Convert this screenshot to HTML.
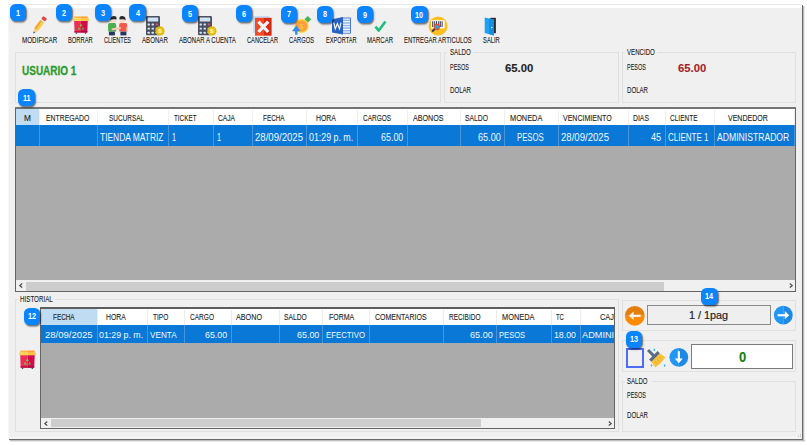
<!DOCTYPE html>
<html><head><meta charset="utf-8"><style>
html,body{margin:0;padding:0;width:807px;height:445px;overflow:hidden;background:#ffffff;position:relative;font-family:"Liberation Sans",sans-serif;}
.b{position:absolute;box-sizing:border-box;}
.t{position:absolute;white-space:pre;line-height:1;transform-origin:0 0;-webkit-text-stroke:0.1px currentColor;font-family:"Liberation Sans",sans-serif;}
</style></head><body>
<div class="b" style="left:8.00px;top:4.00px;width:794.00px;height:435.00px;background:#f0f0f0;"></div>
<div class="b" style="left:8.00px;top:4.00px;width:794.00px;height:1.00px;background:#e9e9e9;"></div>
<div class="b" style="left:8.00px;top:5.00px;width:794.00px;height:3.00px;background:#ffffff;"></div>
<div class="b" style="left:8.00px;top:8.00px;width:1.00px;height:431.00px;background:#f7f7f7;"></div>
<div class="b" style="left:9.00px;top:437.00px;width:792.00px;height:1.00px;background:#f8f8f8;"></div>
<div class="b" style="left:802.00px;top:5.00px;width:1.00px;height:435.00px;background:#6a6a6a;"></div>
<div class="b" style="left:803.00px;top:6.00px;width:2.00px;height:435.00px;background:linear-gradient(90deg,#a8a8a8,#ffffff);"></div>
<div class="b" style="left:9.00px;top:439.00px;width:794.00px;height:1.00px;background:#6a6a6a;"></div>
<div class="b" style="left:10.00px;top:440.00px;width:795.00px;height:2.00px;background:linear-gradient(180deg,#a8a8a8,#ffffff);"></div>
<div class="b" style="left:798.00px;top:436.00px;width:1.00px;height:1.00px;background:#b8b8b8;"></div>
<div class="b" style="left:800.00px;top:436.00px;width:1.00px;height:1.00px;background:#b8b8b8;"></div>
<div class="b" style="left:800.00px;top:434.00px;width:1.00px;height:1.00px;background:#b8b8b8;"></div>
<div class="b" style="left:15.00px;top:52.00px;width:426.00px;height:51.00px;border:1px solid #e0e0e0;"></div>
<div class="b" style="left:444.00px;top:52.00px;width:175.00px;height:51.00px;border:1px solid #e0e0e0;"></div>
<div class="b" style="left:447.00px;top:50.00px;width:26.00px;height:4.00px;background:#f0f0f0;"></div>
<div class="b" style="left:622.00px;top:52.00px;width:174.00px;height:51.00px;border:1px solid #e0e0e0;"></div>
<div class="b" style="left:625.00px;top:50.00px;width:32.00px;height:4.00px;background:#f0f0f0;"></div>
<div class="b" style="left:15.00px;top:107.00px;width:781.00px;height:185.00px;border:1px solid #646464;border-top:2px solid #747474;background:#ababab;"></div>
<div class="b" style="left:16.00px;top:109.00px;width:779.00px;height:16.00px;background:#ffffff;"></div>
<div class="b" style="left:16.00px;top:109.00px;width:23.00px;height:16.00px;background:#bfdcf3;"></div>
<div class="b" style="left:16.00px;top:125.00px;width:779.00px;height:20.50px;background:#0a78d6;"></div>
<div class="b" style="left:39.00px;top:110.00px;width:1.00px;height:15.00px;background:#efefef;"></div>
<div class="b" style="left:39.00px;top:125.00px;width:1.00px;height:20.50px;background:#4a95d8;"></div>
<div class="b" style="left:97.40px;top:110.00px;width:1.00px;height:15.00px;background:#efefef;"></div>
<div class="b" style="left:97.40px;top:125.00px;width:1.00px;height:20.50px;background:#4a95d8;"></div>
<div class="b" style="left:168.00px;top:110.00px;width:1.00px;height:15.00px;background:#efefef;"></div>
<div class="b" style="left:168.00px;top:125.00px;width:1.00px;height:20.50px;background:#4a95d8;"></div>
<div class="b" style="left:212.70px;top:110.00px;width:1.00px;height:15.00px;background:#efefef;"></div>
<div class="b" style="left:212.70px;top:125.00px;width:1.00px;height:20.50px;background:#4a95d8;"></div>
<div class="b" style="left:251.60px;top:110.00px;width:1.00px;height:15.00px;background:#efefef;"></div>
<div class="b" style="left:251.60px;top:125.00px;width:1.00px;height:20.50px;background:#4a95d8;"></div>
<div class="b" style="left:306.40px;top:110.00px;width:1.00px;height:15.00px;background:#efefef;"></div>
<div class="b" style="left:306.40px;top:125.00px;width:1.00px;height:20.50px;background:#4a95d8;"></div>
<div class="b" style="left:357.20px;top:110.00px;width:1.00px;height:15.00px;background:#efefef;"></div>
<div class="b" style="left:357.20px;top:125.00px;width:1.00px;height:20.50px;background:#4a95d8;"></div>
<div class="b" style="left:407.40px;top:110.00px;width:1.00px;height:15.00px;background:#efefef;"></div>
<div class="b" style="left:407.40px;top:125.00px;width:1.00px;height:20.50px;background:#4a95d8;"></div>
<div class="b" style="left:459.50px;top:110.00px;width:1.00px;height:15.00px;background:#efefef;"></div>
<div class="b" style="left:459.50px;top:125.00px;width:1.00px;height:20.50px;background:#4a95d8;"></div>
<div class="b" style="left:503.60px;top:110.00px;width:1.00px;height:15.00px;background:#efefef;"></div>
<div class="b" style="left:503.60px;top:125.00px;width:1.00px;height:20.50px;background:#4a95d8;"></div>
<div class="b" style="left:557.90px;top:110.00px;width:1.00px;height:15.00px;background:#efefef;"></div>
<div class="b" style="left:557.90px;top:125.00px;width:1.00px;height:20.50px;background:#4a95d8;"></div>
<div class="b" style="left:628.00px;top:110.00px;width:1.00px;height:15.00px;background:#efefef;"></div>
<div class="b" style="left:628.00px;top:125.00px;width:1.00px;height:20.50px;background:#4a95d8;"></div>
<div class="b" style="left:665.30px;top:110.00px;width:1.00px;height:15.00px;background:#efefef;"></div>
<div class="b" style="left:665.30px;top:125.00px;width:1.00px;height:20.50px;background:#4a95d8;"></div>
<div class="b" style="left:714.00px;top:110.00px;width:1.00px;height:15.00px;background:#efefef;"></div>
<div class="b" style="left:714.00px;top:125.00px;width:1.00px;height:20.50px;background:#4a95d8;"></div>
<div class="b" style="left:794.00px;top:110.00px;width:1.00px;height:15.00px;background:#efefef;"></div>
<div class="b" style="left:794.00px;top:125.00px;width:1.00px;height:20.50px;background:#4a95d8;"></div>
<div class="b" style="left:16.00px;top:280.00px;width:779.00px;height:11.00px;background:#f0f0f0;"></div>
<div class="b" style="left:26.00px;top:281.50px;width:638.00px;height:9.00px;background:#cdcdcd;"></div>
<div class="b" style="left:15.00px;top:299.00px;width:604.00px;height:133.00px;border:1px solid #e0e0e0;"></div>
<div class="b" style="left:18.00px;top:297.00px;width:37.00px;height:6.00px;background:#f0f0f0;"></div>
<div class="b" style="left:40.00px;top:307.00px;width:575.00px;height:122.00px;border:1px solid #646464;border-top:2px solid #5e5e5e;background:#ababab;"></div>
<div class="b" style="left:41.00px;top:309.00px;width:573.00px;height:16.30px;background:#ffffff;"></div>
<div class="b" style="left:41.00px;top:309.00px;width:55.50px;height:16.30px;background:#bfdcf3;"></div>
<div class="b" style="left:41.00px;top:325.30px;width:573.00px;height:17.40px;background:#0a78d6;"></div>
<div class="b" style="left:96.50px;top:310.00px;width:1.00px;height:15.30px;background:#ececec;"></div>
<div class="b" style="left:96.50px;top:325.30px;width:1.00px;height:17.40px;background:#4a95d8;"></div>
<div class="b" style="left:147.00px;top:310.00px;width:1.00px;height:15.30px;background:#ececec;"></div>
<div class="b" style="left:147.00px;top:325.30px;width:1.00px;height:17.40px;background:#4a95d8;"></div>
<div class="b" style="left:184.20px;top:310.00px;width:1.00px;height:15.30px;background:#ececec;"></div>
<div class="b" style="left:184.20px;top:325.30px;width:1.00px;height:17.40px;background:#4a95d8;"></div>
<div class="b" style="left:230.60px;top:310.00px;width:1.00px;height:15.30px;background:#ececec;"></div>
<div class="b" style="left:230.60px;top:325.30px;width:1.00px;height:17.40px;background:#4a95d8;"></div>
<div class="b" style="left:278.70px;top:310.00px;width:1.00px;height:15.30px;background:#ececec;"></div>
<div class="b" style="left:278.70px;top:325.30px;width:1.00px;height:17.40px;background:#4a95d8;"></div>
<div class="b" style="left:322.40px;top:310.00px;width:1.00px;height:15.30px;background:#ececec;"></div>
<div class="b" style="left:322.40px;top:325.30px;width:1.00px;height:17.40px;background:#4a95d8;"></div>
<div class="b" style="left:369.40px;top:310.00px;width:1.00px;height:15.30px;background:#ececec;"></div>
<div class="b" style="left:369.40px;top:325.30px;width:1.00px;height:17.40px;background:#4a95d8;"></div>
<div class="b" style="left:443.00px;top:310.00px;width:1.00px;height:15.30px;background:#ececec;"></div>
<div class="b" style="left:443.00px;top:325.30px;width:1.00px;height:17.40px;background:#4a95d8;"></div>
<div class="b" style="left:496.30px;top:310.00px;width:1.00px;height:15.30px;background:#ececec;"></div>
<div class="b" style="left:496.30px;top:325.30px;width:1.00px;height:17.40px;background:#4a95d8;"></div>
<div class="b" style="left:550.50px;top:310.00px;width:1.00px;height:15.30px;background:#ececec;"></div>
<div class="b" style="left:550.50px;top:325.30px;width:1.00px;height:17.40px;background:#4a95d8;"></div>
<div class="b" style="left:579.50px;top:310.00px;width:1.00px;height:15.30px;background:#ececec;"></div>
<div class="b" style="left:579.50px;top:325.30px;width:1.00px;height:17.40px;background:#4a95d8;"></div>
<div class="b" style="left:41.00px;top:417.50px;width:573.00px;height:10.50px;background:#f0f0f0;"></div>
<div class="b" style="left:51.30px;top:418.50px;width:429.50px;height:8.50px;background:#cdcdcd;"></div>
<div class="b" style="left:622.00px;top:299.50px;width:174.00px;height:31.50px;border:1px solid #e0e0e0;"></div>
<div class="b" style="left:622.00px;top:340.00px;width:174.00px;height:32.00px;border:1px solid #e0e0e0;"></div>
<div class="b" style="left:622.00px;top:381.00px;width:174.00px;height:51.00px;border:1px solid #e0e0e0;"></div>
<div class="b" style="left:625.00px;top:378.00px;width:27.00px;height:6.00px;background:#f0f0f0;"></div>
<div class="b" style="left:647.30px;top:305.30px;width:123.30px;height:20.20px;border:1px solid #8a8a8a;background:#efefef;"></div>
<div class="b" style="left:691.20px;top:343.80px;width:101.80px;height:24.80px;border:1px solid #7c7c7c;background:#ffffff;"></div>
<div class="b" style="left:625.50px;top:348.00px;width:18.50px;height:20.00px;border:2px solid #4d6bf6;"></div>
<span class="t" id="t1" style="left:22.00px;top:36.07px;font-size:8.30px;font-weight:400;color:#1a1a1a;transform:scale(0.7560,1.0000);">MODIFICAR</span>
<span class="t" id="t2" style="left:68.00px;top:36.07px;font-size:8.30px;font-weight:400;color:#1a1a1a;transform:scale(0.6958,1.0000);">BORRAR</span>
<span class="t" id="t3" style="left:104.00px;top:36.07px;font-size:8.30px;font-weight:400;color:#1a1a1a;transform:scale(0.6654,1.0000);">CLIENTES</span>
<span class="t" id="t4" style="left:142.00px;top:36.07px;font-size:8.30px;font-weight:400;color:#1a1a1a;transform:scale(0.7362,1.0000);">ABONAR</span>
<span class="t" id="t5" style="left:178.70px;top:36.07px;font-size:8.30px;font-weight:400;color:#1a1a1a;transform:scale(0.7291,1.0000);">ABONAR A CUENTA</span>
<span class="t" id="t6" style="left:246.80px;top:36.07px;font-size:8.30px;font-weight:400;color:#1a1a1a;transform:scale(0.6860,1.0000);">CANCELAR</span>
<span class="t" id="t7" style="left:289.00px;top:36.07px;font-size:8.30px;font-weight:400;color:#1a1a1a;transform:scale(0.6950,1.0000);">CARGOS</span>
<span class="t" id="t8" style="left:325.50px;top:36.07px;font-size:8.30px;font-weight:400;color:#1a1a1a;transform:scale(0.6797,1.0000);">EXPORTAR</span>
<span class="t" id="t9" style="left:367.00px;top:36.07px;font-size:8.30px;font-weight:400;color:#1a1a1a;transform:scale(0.7228,1.0000);">MARCAR</span>
<span class="t" id="t10" style="left:404.00px;top:36.07px;font-size:8.30px;font-weight:400;color:#1a1a1a;transform:scale(0.7116,1.0000);">ENTREGAR ARTICULOS</span>
<span class="t" id="t11" style="left:482.50px;top:36.07px;font-size:8.30px;font-weight:400;color:#1a1a1a;transform:scale(0.7005,1.0000);">SALIR</span>
<span class="t" id="t12" style="left:22.30px;top:64.89px;font-size:11.20px;font-weight:700;color:#2a9a2a;transform:scale(0.8929,1.1300);-webkit-text-stroke:0.25px #2a9a2a;">USUARIO 1</span>
<span class="t" id="t13" style="left:449.70px;top:48.07px;font-size:8.30px;font-weight:400;color:#1a1a1a;transform:scale(0.7356,1.0000);">SALDO</span>
<span class="t" id="t14" style="left:449.70px;top:63.17px;font-size:8.30px;font-weight:400;color:#1a1a1a;transform:scale(0.6575,1.0000);">PESOS</span>
<span class="t" id="t15" style="left:449.70px;top:86.07px;font-size:8.30px;font-weight:400;color:#1a1a1a;transform:scale(0.7344,1.0000);">DOLAR</span>
<span class="t" id="t16" style="left:505.00px;top:62.00px;font-size:11.70px;font-weight:700;color:#222222;transform:scale(0.9675,1.0000);">65.00</span>
<span class="t" id="t17" style="left:626.80px;top:48.07px;font-size:8.30px;font-weight:400;color:#1a1a1a;transform:scale(0.7352,1.0000);">VENCIDO</span>
<span class="t" id="t18" style="left:626.80px;top:63.17px;font-size:8.30px;font-weight:400;color:#1a1a1a;transform:scale(0.6575,1.0000);">PESOS</span>
<span class="t" id="t19" style="left:626.80px;top:86.07px;font-size:8.30px;font-weight:400;color:#1a1a1a;transform:scale(0.7344,1.0000);">DOLAR</span>
<span class="t" id="t20" style="left:678.40px;top:62.00px;font-size:11.70px;font-weight:700;color:#a51c28;transform:scale(0.9641,1.0000);">65.00</span>
<span class="t" id="t21" style="left:24.40px;top:113.60px;font-size:8.50px;font-weight:400;color:#1a1a1a;transform:scale(0.9727,1.0000);">M</span>
<span class="t" id="t22" style="left:46.40px;top:113.60px;font-size:8.50px;font-weight:400;color:#1a1a1a;transform:scale(0.8060,1.0000);">ENTREGADO</span>
<span class="t" id="t23" style="left:109.30px;top:113.60px;font-size:8.50px;font-weight:400;color:#1a1a1a;transform:scale(0.7603,1.0000);">SUCURSAL</span>
<span class="t" id="t24" style="left:173.50px;top:113.60px;font-size:8.50px;font-weight:400;color:#1a1a1a;transform:scale(0.7442,1.0000);">TICKET</span>
<span class="t" id="t25" style="left:218.00px;top:113.60px;font-size:8.50px;font-weight:400;color:#1a1a1a;transform:scale(0.7822,1.0000);">CAJA</span>
<span class="t" id="t26" style="left:263.00px;top:113.60px;font-size:8.50px;font-weight:400;color:#1a1a1a;transform:scale(0.7497,1.0000);">FECHA</span>
<span class="t" id="t27" style="left:316.30px;top:113.60px;font-size:8.50px;font-weight:400;color:#1a1a1a;transform:scale(0.8102,1.0000);">HORA</span>
<span class="t" id="t28" style="left:363.20px;top:113.60px;font-size:8.50px;font-weight:400;color:#1a1a1a;transform:scale(0.7600,1.0000);">CARGOS</span>
<span class="t" id="t29" style="left:412.90px;top:113.60px;font-size:8.50px;font-weight:400;color:#1a1a1a;transform:scale(0.8385,1.0000);">ABONOS</span>
<span class="t" id="t30" style="left:465.00px;top:113.60px;font-size:8.50px;font-weight:400;color:#1a1a1a;transform:scale(0.7978,1.0000);">SALDO</span>
<span class="t" id="t31" style="left:509.50px;top:113.60px;font-size:8.50px;font-weight:400;color:#1a1a1a;transform:scale(0.8657,1.0000);">MONEDA</span>
<span class="t" id="t32" style="left:563.40px;top:113.60px;font-size:8.50px;font-weight:400;color:#1a1a1a;transform:scale(0.8253,1.0000);">VENCIMIENTO</span>
<span class="t" id="t33" style="left:633.40px;top:113.60px;font-size:8.50px;font-weight:400;color:#1a1a1a;transform:scale(0.8063,1.0000);">DIAS</span>
<span class="t" id="t34" style="left:670.40px;top:113.60px;font-size:8.50px;font-weight:400;color:#1a1a1a;transform:scale(0.7687,1.0000);">CLIENTE</span>
<span class="t" id="t35" style="left:728.30px;top:113.60px;font-size:8.50px;font-weight:400;color:#1a1a1a;transform:scale(0.8239,1.0000);">VENDEDOR</span>
<span class="t" id="t36" style="left:100.40px;top:132.53px;font-size:10.00px;font-weight:400;color:#f4f8fd;transform:scale(0.8425,1.0000);-webkit-text-stroke:0;">TIENDA MATRIZ</span>
<span class="t" id="t37" style="left:172.30px;top:132.53px;font-size:10.00px;font-weight:400;color:#f4f8fd;transform:scale(0.7191,1.0000);-webkit-text-stroke:0;">1</span>
<span class="t" id="t38" style="left:216.90px;top:132.53px;font-size:10.00px;font-weight:400;color:#f4f8fd;transform:scale(0.7191,1.0000);-webkit-text-stroke:0;">1</span>
<span class="t" id="t39" style="left:254.60px;top:132.53px;font-size:10.00px;font-weight:400;color:#f4f8fd;transform:scale(0.9588,1.0000);-webkit-text-stroke:0;">28/09/2025</span>
<span class="t" id="t40" style="left:309.40px;top:132.53px;font-size:10.00px;font-weight:400;color:#f4f8fd;transform:scale(0.8814,1.0000);-webkit-text-stroke:0;">01:29 p. m.</span>
<span class="t" id="t41" style="left:381.30px;top:132.53px;font-size:10.00px;font-weight:400;color:#f4f8fd;transform:scale(0.8909,1.0000);-webkit-text-stroke:0;">65.00</span>
<span class="t" id="t42" style="left:477.60px;top:132.53px;font-size:10.00px;font-weight:400;color:#f4f8fd;transform:scale(0.9109,1.0000);-webkit-text-stroke:0;">65.00</span>
<span class="t" id="t43" style="left:516.50px;top:132.53px;font-size:10.00px;font-weight:400;color:#f4f8fd;transform:scale(0.7746,1.0000);-webkit-text-stroke:0;">PESOS</span>
<span class="t" id="t44" style="left:560.50px;top:132.53px;font-size:10.00px;font-weight:400;color:#f4f8fd;transform:scale(0.9588,1.0000);-webkit-text-stroke:0;">28/09/2025</span>
<span class="t" id="t45" style="left:651.30px;top:132.53px;font-size:10.00px;font-weight:400;color:#f4f8fd;transform:scale(0.9169,1.0000);-webkit-text-stroke:0;">45</span>
<span class="t" id="t46" style="left:667.80px;top:132.53px;font-size:10.00px;font-weight:400;color:#f4f8fd;transform:scale(0.8007,1.0000);-webkit-text-stroke:0;">CLIENTE 1</span>
<span class="t" id="t47" style="left:717.20px;top:132.53px;font-size:10.00px;font-weight:400;color:#f4f8fd;transform:scale(0.8617,1.0000);-webkit-text-stroke:0;">ADMINISTRADOR</span>
<span class="t" id="t48" style="left:20.00px;top:295.37px;font-size:8.30px;font-weight:400;color:#1a1a1a;transform:scale(0.7513,1.0000);">HISTORIAL</span>
<span class="t" id="t49" style="left:53.00px;top:312.80px;font-size:8.50px;font-weight:400;color:#1a1a1a;transform:scale(0.7497,1.0000);">FECHA</span>
<span class="t" id="t50" style="left:106.40px;top:312.80px;font-size:8.50px;font-weight:400;color:#1a1a1a;transform:scale(0.8061,1.0000);">HORA</span>
<span class="t" id="t51" style="left:152.70px;top:312.80px;font-size:8.50px;font-weight:400;color:#1a1a1a;transform:scale(0.7710,1.0000);">TIPO</span>
<span class="t" id="t52" style="left:189.90px;top:312.80px;font-size:8.50px;font-weight:400;color:#1a1a1a;transform:scale(0.7699,1.0000);">CARGO</span>
<span class="t" id="t53" style="left:236.10px;top:312.80px;font-size:8.50px;font-weight:400;color:#1a1a1a;transform:scale(0.8468,1.0000);">ABONO</span>
<span class="t" id="t54" style="left:284.00px;top:312.80px;font-size:8.50px;font-weight:400;color:#1a1a1a;transform:scale(0.7874,1.0000);">SALDO</span>
<span class="t" id="t55" style="left:328.50px;top:312.80px;font-size:8.50px;font-weight:400;color:#1a1a1a;transform:scale(0.8240,1.0000);">FORMA</span>
<span class="t" id="t56" style="left:375.40px;top:312.80px;font-size:8.50px;font-weight:400;color:#1a1a1a;transform:scale(0.8235,1.0000);">COMENTARIOS</span>
<span class="t" id="t57" style="left:448.70px;top:312.80px;font-size:8.50px;font-weight:400;color:#1a1a1a;transform:scale(0.7665,1.0000);">RECIBIDO</span>
<span class="t" id="t58" style="left:501.80px;top:312.80px;font-size:8.50px;font-weight:400;color:#1a1a1a;transform:scale(0.8683,1.0000);">MONEDA</span>
<span class="t" id="t59" style="left:555.90px;top:312.80px;font-size:8.50px;font-weight:400;color:#1a1a1a;transform:scale(0.6964,1.0000);">TC</span>
<span class="t" id="t60" style="left:44.50px;top:331.21px;font-size:9.20px;font-weight:400;color:#f4f8fd;transform:scale(1.0351,1.0000);-webkit-text-stroke:0;">28/09/2025</span>
<span class="t" id="t61" style="left:99.40px;top:331.21px;font-size:9.20px;font-weight:400;color:#f4f8fd;transform:scale(0.9593,1.0000);-webkit-text-stroke:0;">01:29 p. m.</span>
<span class="t" id="t62" style="left:150.20px;top:331.21px;font-size:9.20px;font-weight:400;color:#f4f8fd;transform:scale(0.8881,1.0000);-webkit-text-stroke:0;">VENTA</span>
<span class="t" id="t63" style="left:204.80px;top:331.21px;font-size:9.20px;font-weight:400;color:#f4f8fd;transform:scale(0.9652,1.0000);-webkit-text-stroke:0;">65.00</span>
<span class="t" id="t64" style="left:296.80px;top:331.21px;font-size:9.20px;font-weight:400;color:#f4f8fd;transform:scale(0.9696,1.0000);-webkit-text-stroke:0;">65.00</span>
<span class="t" id="t65" style="left:326.00px;top:331.21px;font-size:9.20px;font-weight:400;color:#f4f8fd;transform:scale(0.8487,1.0000);-webkit-text-stroke:0;">EFECTIVO</span>
<span class="t" id="t66" style="left:469.80px;top:331.21px;font-size:9.20px;font-weight:400;color:#f4f8fd;transform:scale(0.9913,1.0000);-webkit-text-stroke:0;">65.00</span>
<span class="t" id="t67" style="left:499.30px;top:331.21px;font-size:9.20px;font-weight:400;color:#f4f8fd;transform:scale(0.8272,1.0000);-webkit-text-stroke:0;">PESOS</span>
<span class="t" id="t68" style="left:554.10px;top:331.21px;font-size:9.20px;font-weight:400;color:#f4f8fd;transform:scale(0.9522,1.0000);-webkit-text-stroke:0;">18.00</span>
<span class="t" id="t69" style="left:689.20px;top:309.91px;font-size:10.50px;font-weight:400;color:#1e1e1e;transform:scale(1.0302,1.0000);-webkit-text-stroke:0.2px #1e1e1e;">1 / 1pag</span>
<span class="t" id="t70" style="left:738.80px;top:349.55px;font-size:14.00px;font-weight:700;color:#0e800e;transform:scale(0.9234,1.0000);">0</span>
<span class="t" id="t71" style="left:627.40px;top:376.77px;font-size:8.30px;font-weight:400;color:#1a1a1a;transform:scale(0.7285,1.0000);">SALDO</span>
<span class="t" id="t72" style="left:627.40px;top:390.57px;font-size:8.30px;font-weight:400;color:#1a1a1a;transform:scale(0.6575,1.0000);">PESOS</span>
<span class="t" id="t73" style="left:627.40px;top:411.27px;font-size:8.30px;font-weight:400;color:#1a1a1a;transform:scale(0.7344,1.0000);">DOLAR</span>
<svg style="position:absolute;left:0;top:0" width="807" height="445" viewBox="0 0 807 445">
<g transform="translate(33.3,33.4) rotate(-53.5)">
<polygon points="0,0 2,-1 2,1" fill="#3f4552"/>
<polygon points="2,-1 5,-2.4 5,2.4 2,1" fill="#f6c98e"/>
<rect x="5" y="-2.4" width="10" height="2.4" fill="#f7a229"/>
<rect x="5" y="0" width="10" height="2.4" fill="#ffcd45"/>
<rect x="15" y="-2.4" width="1.6" height="4.8" fill="#d3e4f0"/>
<rect x="16.6" y="-2.4" width="3.3" height="4.8" rx="0.9" fill="#e8443a"/>
</g>
</svg>
<svg style="position:absolute;left:72.9px;top:16px" width="15.9" height="18.6" viewBox="0 0 17 19">
<rect x="1.3" y="0" width="7.2" height="2.2" fill="#ffb540"/><rect x="8.5" y="0" width="7.2" height="2.2" fill="#ff9d2e"/>
<rect x="0" y="2.1" width="8.5" height="2.7" fill="#ffd84a"/><rect x="8.5" y="2.1" width="8.5" height="2.7" fill="#ffc83a"/>
<polygon points="1.2,4.8 8.5,4.8 8.5,17.2 1.7,17.2" fill="#ee2c58"/><polygon points="8.5,4.8 15.8,4.8 15.3,17.2 8.5,17.2" fill="#d30b4d"/>
<rect x="1.6" y="15.6" width="6.9" height="1.7" fill="#c8123f"/><rect x="8.5" y="15.6" width="6.8" height="1.7" fill="#a90a45"/>
<circle cx="3.6" cy="17.9" r="0.8" fill="#3b4a6b"/><circle cx="13.4" cy="17.9" r="0.8" fill="#3b4a6b"/>
<polygon points="8.45,7.4 9.95,10.4 6.95,10.4" fill="#66d32e"/><polygon points="6.3,11.2 7.8,14.1 4.8,14.1" fill="#66d32e"/><polygon points="10.6,11.2 12.1,14.1 9.1,14.1" fill="#4cc63c"/>
</svg>
<svg style="position:absolute;left:19.4px;top:350.2px" width="16.9" height="20" viewBox="0 0 17 19">
<rect x="1.3" y="0" width="7.2" height="2.2" fill="#ffb540"/><rect x="8.5" y="0" width="7.2" height="2.2" fill="#ff9d2e"/>
<rect x="0" y="2.1" width="8.5" height="2.7" fill="#ffd84a"/><rect x="8.5" y="2.1" width="8.5" height="2.7" fill="#ffc83a"/>
<polygon points="1.2,4.8 8.5,4.8 8.5,17.2 1.7,17.2" fill="#ee2c58"/><polygon points="8.5,4.8 15.8,4.8 15.3,17.2 8.5,17.2" fill="#d30b4d"/>
<rect x="1.6" y="15.6" width="6.9" height="1.7" fill="#c8123f"/><rect x="8.5" y="15.6" width="6.8" height="1.7" fill="#a90a45"/>
<circle cx="3.6" cy="17.9" r="0.8" fill="#3b4a6b"/><circle cx="13.4" cy="17.9" r="0.8" fill="#3b4a6b"/>
<polygon points="8.45,7.4 9.95,10.4 6.95,10.4" fill="#66d32e"/><polygon points="6.3,11.2 7.8,14.1 4.8,14.1" fill="#66d32e"/><polygon points="10.6,11.2 12.1,14.1 9.1,14.1" fill="#4cc63c"/>
</svg>
<svg style="position:absolute;left:107px;top:15px" width="22" height="22" viewBox="0 0 22 22">
<rect x="4" y="3.2" width="5" height="5.4" rx="1.8" fill="#f9dccb"/>
<path d="M3.4,5.6 Q3,1.4 6.6,1.1 Q9.6,1.0 9.6,3.4 L9.4,4.4 Q6.4,3.8 4.4,4.6 Z" fill="#2a2a2a"/>
<path d="M1,10 Q1,8.2 3,8.1 L7.6,8.1 Q9.2,8.2 9.2,10 L9.2,16.6 L1.2,16.6 Z" fill="#4caf50"/>
<rect x="1.9" y="16.6" width="6" height="3.8" fill="#27365e"/>
<rect x="13" y="3.2" width="5" height="5.4" rx="1.8" fill="#f9dccb"/>
<path d="M18.6,5.6 Q19,1.4 15.4,1.1 Q12.4,1.0 12.4,3.4 L12.6,4.4 Q15.6,3.8 17.6,4.6 Z" fill="#2a2a2a"/>
<path d="M12.1,10 Q12.1,8.2 14,8.1 L18.4,8.1 Q20.2,8.2 20.2,10 L20.2,16.6 L12.2,16.6 Z" fill="#f45b4b"/>
<rect x="13.4" y="16.6" width="6" height="3.8" fill="#27365e"/>
<path d="M4.6,13.4 L9.4,12.4 L13.6,11.9 L14.2,13.6 L10,14.8 L5,15.2 Z" fill="#f7c9b1"/>
<rect x="19.3" y="12" width="1.3" height="4.4" rx="0.6" fill="#f7c9b1"/>
</svg>
<svg style="position:absolute;left:145.8px;top:16.1px" width="19" height="20" viewBox="0 0 19 20">
<rect x="0" y="0" width="14" height="19.3" rx="1.3" fill="#4b4f5e"/>
<rect x="1.7" y="1.6" width="10.5" height="3.9" rx="0.4" fill="#cfe3f7"/>
<rect x="1.6" y="7.6" width="2.3" height="1.9" rx="0.4" fill="#d5e7f8"/><rect x="5.6" y="7.6" width="2.3" height="1.9" rx="0.4" fill="#d5e7f8"/><rect x="9.7" y="7.6" width="2.3" height="1.9" rx="0.4" fill="#e8475f"/><rect x="1.6" y="11.7" width="2.3" height="1.9" rx="0.4" fill="#d5e7f8"/><rect x="5.6" y="11.7" width="2.3" height="1.9" rx="0.4" fill="#d5e7f8"/><rect x="9.7" y="11.7" width="2.3" height="1.9" rx="0.4" fill="#d5e7f8"/><rect x="1.6" y="15.8" width="2.3" height="1.9" rx="0.4" fill="#d5e7f8"/><rect x="5.6" y="15.8" width="2.3" height="1.9" rx="0.4" fill="#d5e7f8"/><rect x="9.7" y="15.8" width="2.3" height="1.9" rx="0.4" fill="#d5e7f8"/>
<circle cx="14" cy="14.9" r="4.6" fill="#e6bd12"/><circle cx="14" cy="14.9" r="3.5" fill="#f0c918" stroke="#d9a900" stroke-width="0.6"/>
<text x="14" y="17.3" font-family="Liberation Sans" font-size="6" font-weight="bold" fill="#fff6c0" text-anchor="middle">$</text>
</svg>
<svg style="position:absolute;left:197.9px;top:16.1px" width="19" height="20" viewBox="0 0 19 20">
<rect x="0" y="0" width="14" height="19.3" rx="1.3" fill="#4b4f5e"/>
<rect x="1.7" y="1.6" width="10.5" height="3.9" rx="0.4" fill="#cfe3f7"/>
<rect x="1.6" y="7.6" width="2.3" height="1.9" rx="0.4" fill="#d5e7f8"/><rect x="5.6" y="7.6" width="2.3" height="1.9" rx="0.4" fill="#d5e7f8"/><rect x="9.7" y="7.6" width="2.3" height="1.9" rx="0.4" fill="#e8475f"/><rect x="1.6" y="11.7" width="2.3" height="1.9" rx="0.4" fill="#d5e7f8"/><rect x="5.6" y="11.7" width="2.3" height="1.9" rx="0.4" fill="#d5e7f8"/><rect x="9.7" y="11.7" width="2.3" height="1.9" rx="0.4" fill="#d5e7f8"/><rect x="1.6" y="15.8" width="2.3" height="1.9" rx="0.4" fill="#d5e7f8"/><rect x="5.6" y="15.8" width="2.3" height="1.9" rx="0.4" fill="#d5e7f8"/><rect x="9.7" y="15.8" width="2.3" height="1.9" rx="0.4" fill="#d5e7f8"/>
<circle cx="14" cy="14.9" r="4.6" fill="#e6bd12"/><circle cx="14" cy="14.9" r="3.5" fill="#f0c918" stroke="#d9a900" stroke-width="0.6"/>
<text x="14" y="17.3" font-family="Liberation Sans" font-size="6" font-weight="bold" fill="#fff6c0" text-anchor="middle">$</text>
</svg>
<svg style="position:absolute;left:253px;top:16px" width="19" height="20" viewBox="0 0 19 20">
<rect x="0.2" y="0" width="16.1" height="17" fill="#c3ddf5"/>
<rect x="2" y="1.8" width="8.3" height="17.9" fill="#f24a25"/>
<rect x="10.3" y="1.8" width="8.3" height="17.9" fill="#d92a12"/>
<path d="M5.4,5.6 L15.2,16 M15.2,5.6 L5.4,16" stroke="#eef6fd" stroke-width="3.2"/>
</svg>
<svg style="position:absolute;left:292px;top:15px" width="20" height="22" viewBox="0 0 20 22">
<path d="M13,7 L15.6,4.4" stroke="#3d9b4f" stroke-width="1.8"/>
<polygon points="15.8,0.9 19.2,4.3 15.8,7.7 12.4,4.3" fill="#45b25d"/>
<circle cx="9.6" cy="11" r="7.1" fill="#ffd43a"/>
<circle cx="9.6" cy="11" r="5.8" fill="#ff9e3c"/>
<text x="9.6" y="14" font-family="Liberation Sans" font-size="8" font-weight="bold" fill="#f9c24a" text-anchor="middle">$</text>
<polygon points="0.6,16 4.3,10.8 8,16" fill="#2c8ef0" stroke="#2c8ef0" stroke-width="0.6" stroke-linejoin="round"/>
<rect x="3.1" y="15.4" width="2.4" height="4.4" rx="0.6" fill="#2c8ef0"/>
</svg>
<svg style="position:absolute;left:331px;top:16px" width="21" height="20" viewBox="0 0 21 20">
<rect x="10.5" y="2" width="9" height="15.2" fill="#ffffff" stroke="#3a6fcb" stroke-width="0.9"/>
<rect x="11" y="3.6" width="8" height="1.5" fill="#8fb2e6"/><rect x="11" y="6.2" width="8" height="1.5" fill="#8fb2e6"/>
<rect x="11" y="8.8" width="8" height="1.5" fill="#8fb2e6"/><rect x="11" y="11.4" width="8" height="1.5" fill="#8fb2e6"/>
<rect x="11" y="14" width="8" height="1.5" fill="#8fb2e6"/>
<polygon points="1,3.2 12,1 12,18.6 1,16.6" fill="#2862c2"/>
<path d="M2.8,6.6 L4.3,13 L6.4,7.6 L8.5,13 L10,6.6" stroke="#ffffff" stroke-width="1.1" fill="none"/>
</svg>
<svg style="position:absolute;left:372px;top:18px" width="16" height="15" viewBox="0 0 16 15">
<path d="M3.4,8.6 L6.8,12.6 L13.4,3.6" stroke="#1fbf7c" stroke-width="2.6" fill="none" stroke-linejoin="round"/>
</svg>
<svg style="position:absolute;left:428px;top:16px" width="20" height="20" viewBox="0 0 20 20">
<circle cx="10" cy="10" r="9.5" fill="#fbbf1f"/>
<rect x="3" y="4.2" width="13.6" height="8.2" fill="#ffffff"/>
<rect x="4.2" y="5.2" width="1.1" height="5.8" fill="#3a3650"/><rect x="6.2" y="5.2" width="0.8" height="5.8" fill="#3a3650"/>
<rect x="7.8" y="5.2" width="1.3" height="5.8" fill="#3a3650"/><rect x="10" y="5.2" width="0.8" height="5.8" fill="#3a3650"/>
<rect x="11.6" y="5.2" width="1.2" height="5.8" fill="#3a3650"/><rect x="13.6" y="5.2" width="1" height="5.8" fill="#3a3650"/>
<path d="M7,12.6 L4.2,15.6" stroke="#2c2f5c" stroke-width="2"/>
<circle cx="8.8" cy="11" r="2.6" fill="#2ba7e6" stroke="#ea4a2c" stroke-width="1.1"/>
</svg>
<svg style="position:absolute;left:484px;top:17px" width="13" height="20" viewBox="0 0 13 20">
<rect x="6.3" y="0.8" width="5.6" height="15.4" fill="#2e2b2b"/>
<polygon points="0.7,0.5 9.8,2.4 9.8,18.4 0.7,16" fill="#1da2f1"/>
<polygon points="5,1.4 9.8,2.4 9.8,18.4 5,17.1" fill="#148ee3"/>
<circle cx="7.8" cy="10.5" r="0.7" fill="#ffffff"/>
</svg>
<svg style="position:absolute;left:624px;top:305px" width="22" height="22" viewBox="0 0 22 22">
<path d="M0.9,10.8 A9.9,9.9 0 0 1 20.7,10.8 Z" fill="#e57f0b"/>
<path d="M0.9,10.8 A9.9,9.9 0 0 0 20.7,10.8 Z" fill="#ff8a00"/>
<polygon points="5,10.8 9.6,6.6 9.6,15" fill="#f4f4f4"/>
<rect x="9" y="9.7" width="7.6" height="2.2" fill="#f4f4f4"/>
</svg>
<svg style="position:absolute;left:773px;top:305px" width="21" height="21" viewBox="0 0 21 21">
<path d="M10.3,0.8 A9.4,9.4 0 0 0 10.3,19.6 Z" fill="#2196f3"/>
<path d="M10.3,0.8 A9.4,9.4 0 0 1 10.3,19.6 Z" fill="#1e88e5"/>
<polygon points="16.2,10.2 11.8,6.1 11.8,14.3" fill="#ffffff"/>
<rect x="4.6" y="9.2" width="7.6" height="2.1" fill="#ffffff"/>
</svg>
<svg style="position:absolute;left:669px;top:347px" width="21" height="21" viewBox="0 0 21 21">
<path d="M9.8,0.9 A9.4,9.4 0 0 0 9.8,19.7 Z" fill="#2196f3"/>
<path d="M9.8,0.9 A9.4,9.4 0 0 1 9.8,19.7 Z" fill="#1e88e5"/>
<polygon points="9.8,16.2 5.8,11.6 13.8,11.6" fill="#ffffff"/>
<rect x="8.8" y="4.2" width="2.1" height="8" fill="#ffffff"/>
</svg>
<svg style="position:absolute;left:647px;top:347px" width="21" height="22" viewBox="0 0 21 22">
<g transform="translate(1.4,3.4) rotate(45)">
<rect x="-0.5" y="-1.5" width="8" height="3" fill="#5d6a80"/>
<path d="M10,-6 L17,-7.2 Q18.6,0 17,7.2 L10,6 Z" fill="#f7c23c"/>
<rect x="7" y="-6" width="3.2" height="12" fill="#5d6a80"/>
<path d="M12.5,-3 L15.5,-3.2 M12.5,0 L16,0 M12.5,3 L15.5,3.2" stroke="#eb9a22" stroke-width="0.8"/>
</g>
<polygon points="7.3,1.2 8.2,2.8 7.3,4.4 6.4,2.8" fill="#29b3f0"/>
<polygon points="4.5,16.9 5.4,18.5 4.5,20.1 3.6,18.5" fill="#29b3f0"/>
<polygon points="17.7,16.9 18.6,18.5 17.7,20.1 16.8,18.5" fill="#29b3f0"/>
</svg>
<div style="position:absolute;left:0;top:0;width:614px;height:445px;overflow:hidden">
<span class="t" id="t74" style="left:600.30px;top:312.80px;font-size:8.50px;font-weight:400;color:#1a1a1a;transform:scale(0.8700,1.0000);">CAJERO</span>
<span class="t" id="t75" style="left:582.40px;top:331.21px;font-size:9.20px;font-weight:400;color:#f4f8fd;transform:scale(1.0003,1.0000);-webkit-text-stroke:0;">ADMINISTRADOR</span>
</div>
<svg style="position:absolute;left:18.50px;top:283.20px" width="4" height="5.2" viewBox="0 0 4 5.2"><path d="M3.2,0.6 L0.8,2.6 L3.2,4.6" stroke="#505050" stroke-width="1.25" fill="none"/></svg>
<svg style="position:absolute;left:788.60px;top:283.20px" width="4" height="5.2" viewBox="0 0 4 5.2"><path d="M0.8,0.6 L3.2,2.6 L0.8,4.6" stroke="#505050" stroke-width="1.25" fill="none"/></svg>
<svg style="position:absolute;left:43.80px;top:420.60px" width="4" height="5.2" viewBox="0 0 4 5.2"><path d="M3.2,0.6 L0.8,2.6 L3.2,4.6" stroke="#505050" stroke-width="1.25" fill="none"/></svg>
<svg style="position:absolute;left:607.60px;top:420.60px" width="4" height="5.2" viewBox="0 0 4 5.2"><path d="M0.8,0.6 L3.2,2.6 L0.8,4.6" stroke="#505050" stroke-width="1.25" fill="none"/></svg>
<div class="b" style="left:10.00px;top:4.30px;width:16.40px;height:17.20px;background:#0a84ff;border-radius:5.5px;box-shadow:1px 1.5px 1.6px rgba(0,0,0,0.55);"></div>
<div class="b" style="left:55.80px;top:4.30px;width:16.40px;height:17.20px;background:#0a84ff;border-radius:5.5px;box-shadow:1px 1.5px 1.6px rgba(0,0,0,0.55);"></div>
<div class="b" style="left:94.70px;top:4.30px;width:16.40px;height:17.20px;background:#0a84ff;border-radius:5.5px;box-shadow:1px 1.5px 1.6px rgba(0,0,0,0.55);"></div>
<div class="b" style="left:129.40px;top:4.30px;width:16.40px;height:17.20px;background:#0a84ff;border-radius:5.5px;box-shadow:1px 1.5px 1.6px rgba(0,0,0,0.55);"></div>
<div class="b" style="left:181.60px;top:4.80px;width:16.40px;height:17.20px;background:#0a84ff;border-radius:5.5px;box-shadow:1px 1.5px 1.6px rgba(0,0,0,0.55);"></div>
<div class="b" style="left:235.90px;top:4.80px;width:16.40px;height:17.20px;background:#0a84ff;border-radius:5.5px;box-shadow:1px 1.5px 1.6px rgba(0,0,0,0.55);"></div>
<div class="b" style="left:281.00px;top:5.60px;width:16.40px;height:17.20px;background:#0a84ff;border-radius:5.5px;box-shadow:1px 1.5px 1.6px rgba(0,0,0,0.55);"></div>
<div class="b" style="left:316.80px;top:5.60px;width:16.40px;height:17.20px;background:#0a84ff;border-radius:5.5px;box-shadow:1px 1.5px 1.6px rgba(0,0,0,0.55);"></div>
<div class="b" style="left:356.80px;top:6.20px;width:16.40px;height:17.20px;background:#0a84ff;border-radius:5.5px;box-shadow:1px 1.5px 1.6px rgba(0,0,0,0.55);"></div>
<div class="b" style="left:411.20px;top:6.10px;width:16.40px;height:17.20px;background:#0a84ff;border-radius:5.5px;box-shadow:1px 1.5px 1.6px rgba(0,0,0,0.55);"></div>
<div class="b" style="left:18.40px;top:89.30px;width:16.40px;height:17.20px;background:#0a84ff;border-radius:5.5px;box-shadow:1px 1.5px 1.6px rgba(0,0,0,0.55);"></div>
<div class="b" style="left:23.70px;top:307.70px;width:16.40px;height:17.20px;background:#0a84ff;border-radius:5.5px;box-shadow:1px 1.5px 1.6px rgba(0,0,0,0.55);"></div>
<div class="b" style="left:625.70px;top:330.50px;width:16.40px;height:17.20px;background:#0a84ff;border-radius:5.5px;box-shadow:1px 1.5px 1.6px rgba(0,0,0,0.55);"></div>
<div class="b" style="left:701.20px;top:287.60px;width:16.40px;height:17.20px;background:#0a84ff;border-radius:5.5px;box-shadow:1px 1.5px 1.6px rgba(0,0,0,0.55);"></div>
<span class="t" id="t76" style="left:16.19px;top:9.09px;font-size:8.40px;font-weight:700;color:#fff;-webkit-text-stroke:0;transform:scaleX(0.860)">1</span>
<span class="t" id="t77" style="left:61.99px;top:9.09px;font-size:8.40px;font-weight:700;color:#fff;-webkit-text-stroke:0;transform:scaleX(0.860)">2</span>
<span class="t" id="t78" style="left:100.89px;top:9.09px;font-size:8.40px;font-weight:700;color:#fff;-webkit-text-stroke:0;transform:scaleX(0.860)">3</span>
<span class="t" id="t79" style="left:135.59px;top:9.09px;font-size:8.40px;font-weight:700;color:#fff;-webkit-text-stroke:0;transform:scaleX(0.860)">4</span>
<span class="t" id="t80" style="left:187.79px;top:9.59px;font-size:8.40px;font-weight:700;color:#fff;-webkit-text-stroke:0;transform:scaleX(0.860)">5</span>
<span class="t" id="t81" style="left:242.09px;top:9.59px;font-size:8.40px;font-weight:700;color:#fff;-webkit-text-stroke:0;transform:scaleX(0.860)">6</span>
<span class="t" id="t82" style="left:287.19px;top:10.39px;font-size:8.40px;font-weight:700;color:#fff;-webkit-text-stroke:0;transform:scaleX(0.860)">7</span>
<span class="t" id="t83" style="left:322.99px;top:10.39px;font-size:8.40px;font-weight:700;color:#fff;-webkit-text-stroke:0;transform:scaleX(0.860)">8</span>
<span class="t" id="t84" style="left:362.99px;top:10.99px;font-size:8.40px;font-weight:700;color:#fff;-webkit-text-stroke:0;transform:scaleX(0.860)">9</span>
<span class="t" id="t85" style="left:415.39px;top:10.89px;font-size:8.40px;font-weight:700;color:#fff;-webkit-text-stroke:0;transform:scaleX(0.860)">10</span>
<span class="t" id="t86" style="left:22.79px;top:94.09px;font-size:8.40px;font-weight:700;color:#fff;-webkit-text-stroke:0;transform:scaleX(0.860)">11</span>
<span class="t" id="t87" style="left:27.89px;top:312.49px;font-size:8.40px;font-weight:700;color:#fff;-webkit-text-stroke:0;transform:scaleX(0.860)">12</span>
<span class="t" id="t88" style="left:629.89px;top:335.29px;font-size:8.40px;font-weight:700;color:#fff;-webkit-text-stroke:0;transform:scaleX(0.860)">13</span>
<span class="t" id="t89" style="left:705.39px;top:292.39px;font-size:8.40px;font-weight:700;color:#fff;-webkit-text-stroke:0;transform:scaleX(0.860)">14</span>
</body></html>
